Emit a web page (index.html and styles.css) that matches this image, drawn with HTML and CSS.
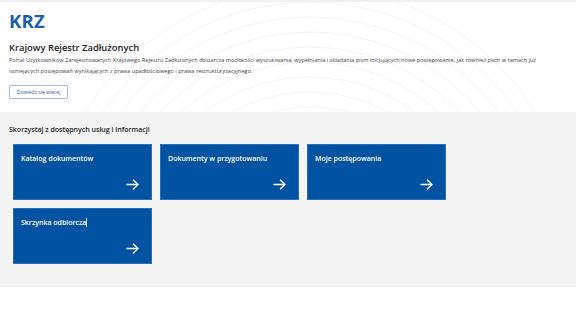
FILE: index.html
```html
<!DOCTYPE html>
<html lang="pl">
<head>
<meta charset="utf-8">
<link rel="stylesheet" href="styles.css">
</head>
<body>
<div class="topline"></div>
<header class="hero">
  <svg class="waves" width="576" height="110" viewBox="0 0 576 110" aria-hidden="true">
    <g fill="none" stroke="#f1f2f7" stroke-width="1">
      <circle cx="310" cy="250" r="130"/>
      <circle cx="310" cy="250" r="145"/>
      <circle cx="310" cy="250" r="160"/>
      <circle cx="310" cy="250" r="175"/>
      <circle cx="310" cy="250" r="190"/>
      <circle cx="310" cy="250" r="205"/>
      <circle cx="310" cy="250" r="220"/>
      <circle cx="310" cy="250" r="235"/>
      <circle cx="310" cy="250" r="250"/>
      <circle cx="310" cy="250" r="265"/>
    </g>
  </svg>
  <div class="hero-inner">
    <div class="logo">KRZ</div>
    <h1 class="title">Krajowy Rejestr Zadłużonych</h1>
    <p class="lead">Portal Użytkowników Zarejestrowanych Krajowego Rejestru Zadłużonych dostarcza możliwości wyszukiwania, wypełniania i składania pism inicjujących nowe postępowanie, jak również pism w ramach już istniejących postępowań wynikających z prawa upadłościowego i prawa restrukturyzacyjnego.</p>
    <a class="btn" href="#">Dowiedz się więcej</a>
  </div>
</header>
<section class="services">
  <h2 class="services-title">Skorzystaj z dostępnych usług i informacji</h2>
  <div class="tiles">
    <a class="tile" href="#"><span class="tile-label">Katalog dokumentów</span><svg class="arrow" width="13" height="11" viewBox="0 0 13 11"><path d="M0.5 5.5H12M7 0.7L12 5.5L7 10.3" fill="none" stroke="#fff" stroke-width="1.3"/></svg></a>
    <a class="tile" href="#"><span class="tile-label">Dokumenty w przygotowaniu</span><svg class="arrow" width="13" height="11" viewBox="0 0 13 11"><path d="M0.5 5.5H12M7 0.7L12 5.5L7 10.3" fill="none" stroke="#fff" stroke-width="1.3"/></svg></a>
    <a class="tile" href="#"><span class="tile-label">Moje postępowania</span><svg class="arrow" width="13" height="11" viewBox="0 0 13 11"><path d="M0.5 5.5H12M7 0.7L12 5.5L7 10.3" fill="none" stroke="#fff" stroke-width="1.3"/></svg></a>
    <a class="tile" href="#"><span class="tile-label">Skrzynka odbiorcza<span class="caret"></span></span><svg class="arrow" width="13" height="11" viewBox="0 0 13 11"><path d="M0.5 5.5H12M7 0.7L12 5.5L7 10.3" fill="none" stroke="#fff" stroke-width="1.3"/></svg></a>
  </div>
</section>
</body>
</html>
```
FILE: styles.css
```css
html, body {
  margin: 0;
  padding: 0;
  background: #fff;
  font-family: "Open Sans", "Noto Sans", sans-serif;
  color: #222;
}
.topline {
  height: 2px;
  background: #f0f0f0;
}
.hero {
  position: relative;
  height: 110px;
  overflow: hidden;
}
.waves {
  position: absolute;
  left: 0;
  top: 0;
}
.hero-inner {
  position: relative;
  padding: 8px 9px 0;
}
.logo {
  font-size: 18.5px;
  font-weight: 700;
  color: #1b5ea9;
  line-height: 22px;
  letter-spacing: 0.2px;
}
.title {
  margin: 9px 0 0;
  font-size: 9.4px;
  font-weight: 600;
  line-height: 13px;
  color: #1d1d1d;
}
.lead {
  margin: 1px 0 0;
  font-size: 5.6px;
  line-height: 11px;
  color: #444;
  max-width: 545px;
}
.btn {
  display: inline-block;
  margin-top: 1px;
  padding: 0 7px;
  height: 12px;
  line-height: 12px;
  border: 1px solid #9fbde0;
  border-radius: 2px;
  font-size: 5px;
  color: #2d5b93;
  text-decoration: none;
}
.services {
  background: #f4f4f4;
  padding: 13px 9px 23px;
}
.services-title {
  margin: 0;
  font-size: 7px;
  font-weight: 600;
  line-height: 10px;
  color: #1d1d1d;
}
.tiles {
  display: grid;
  grid-template-columns: repeat(3, 139px);
  column-gap: 8px;
  row-gap: 8px;
  margin: 9px 0 0 4px;
}
.tile {
  position: relative;
  display: flex;
  flex-direction: column;
  justify-content: space-between;
  height: 56px;
  box-sizing: border-box;
  padding: 9px 12px 9px 7px;
  background: #0052a3;
  border: 1px solid #2b6cb5;
  text-decoration: none;
}
.tile-label {
  font-size: 7px;
  font-weight: 600;
  color: #fff;
  line-height: 9px;
}
.caret {
  display: inline-block;
  width: 1px;
  height: 9px;
  background: #cfe0f5;
  vertical-align: top;
}
.arrow {
  align-self: flex-end;
}
```
